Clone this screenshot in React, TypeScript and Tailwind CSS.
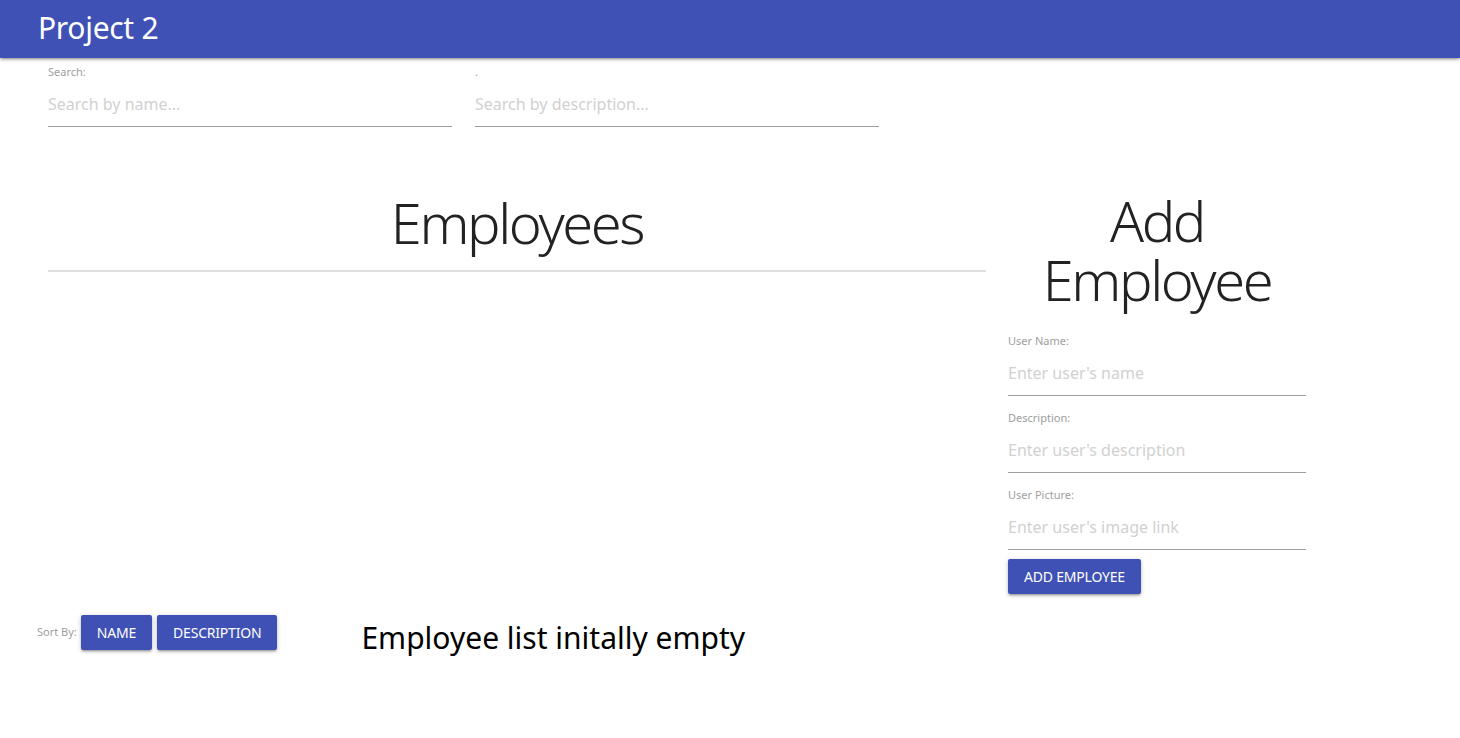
import React from 'react';

const font = { fontFamily: '"Noto Sans", "Open Sans", Arial, sans-serif' };

function Field({ label, placeholder, className = '' }: { label: string; placeholder: string; className?: string }) {
  return (
    <div className={`flex flex-col ${className}`}>
      <label className="text-[11px] leading-[14px] text-[#9e9e9e]">{label}</label>
      <input
        className="h-[48px] border-b border-[#9e9e9e] bg-transparent pt-[2px] text-[16px] text-[#333] outline-none placeholder:text-[#d1d1d1]"
        placeholder={placeholder}
      />
    </div>
  );
}

function Btn({ children }: { children: React.ReactNode }) {
  return (
    <button className="h-[35px] rounded-[2px] bg-[#3f51b5] px-4 text-[14px] uppercase tracking-[-0.2px] text-white shadow-[0_2px_2px_0_rgba(0,0,0,0.14),0_3px_1px_-2px_rgba(0,0,0,0.12),0_1px_5px_0_rgba(0,0,0,0.2)]">
      {children}
    </button>
  );
}

export default function App() {
  return (
    <div className="min-h-[738px] bg-white" style={font}>
      <nav className="relative z-10 flex h-[58px] items-center bg-[#3f51b5] px-[38px] pb-[3px] shadow-[0_2px_2px_0_rgba(0,0,0,0.14),0_3px_1px_-2px_rgba(0,0,0,0.12),0_1px_5px_0_rgba(0,0,0,0.2)]">
        <span className="text-[30px] leading-none tracking-[-0.3px] text-white">Project 2</span>
      </nav>

      <div className="flex gap-[23px] px-[48px] pt-[7px]">
        <Field className="w-[404px]" label="Search:" placeholder="Search by name..." />
        <Field className="w-[404px]" label="." placeholder="Search by description..." />
      </div>

      <div className="mt-[64px] flex gap-[22px] pl-[48px]">
        <div className="w-[938px]">
          <h2 className="text-center text-[56px] font-light leading-[62px] tracking-[-2.4px] text-[#222]">Employees</h2>
          <div className="mt-[17px] h-[2px] bg-[#e0e0e0]" />
        </div>
        <div className="w-[298px]">
          <h2 className="text-center text-[56px] font-light leading-[59px] tracking-[-2.4px] text-[#222]">Add Employee</h2>
          <div className="mt-[25px] flex flex-col gap-[15px]">
            <Field label="User Name:" placeholder="Enter user's name" />
            <Field label="Description:" placeholder="Enter user's description" />
            <Field label="User Picture:" placeholder="Enter user's image link" />
          </div>
          <div className="mt-[9px]">
            <Btn>Add Employee</Btn>
          </div>
        </div>
      </div>

      <div className="mt-[21px] flex items-start pl-[37px]">
        <span className="mr-[4px] mt-[10px] text-[11px] leading-[14px] text-[#9e9e9e]">Sort By:</span>
        <div className="flex gap-[5px]">
          <Btn>Name</Btn>
          <Btn>Description</Btn>
        </div>
        <span className="ml-[84px] mt-[3px] text-[30px] leading-[40px] text-black">Employee list initally empty</span>
      </div>
    </div>
  );
}
